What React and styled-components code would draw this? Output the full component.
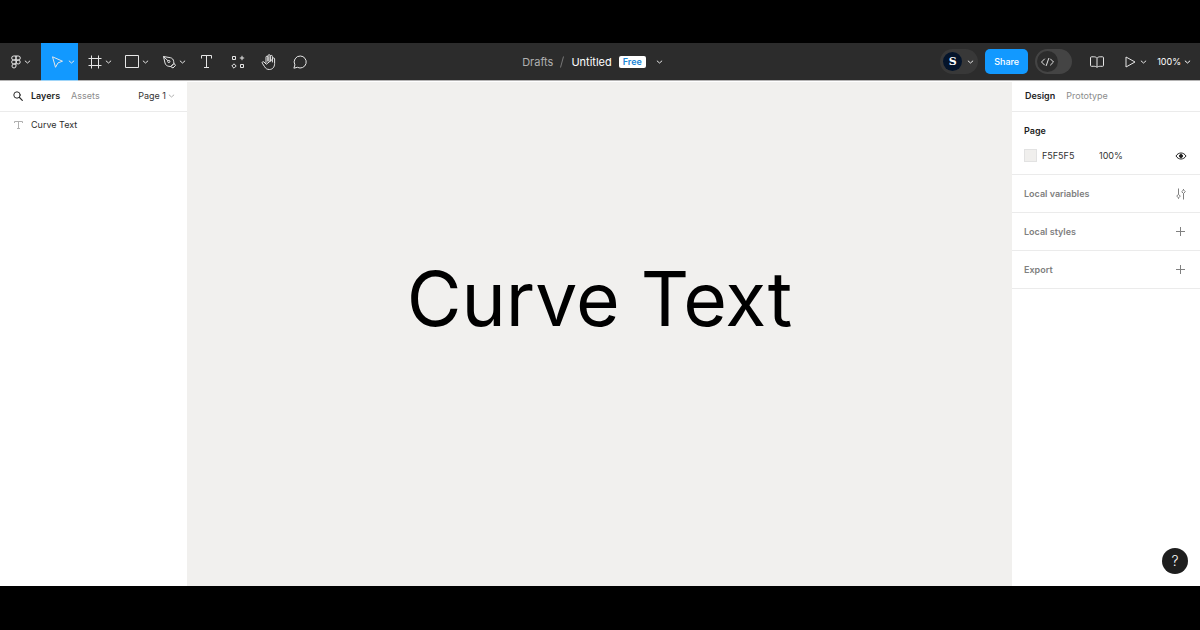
import React from 'react'
import styled, {createGlobalStyle, css} from 'styled-components'

const GlobalStyle = createGlobalStyle`
  * {
    box-sizing: border-box;
  }
  body {
    margin: 0;
    background: #000;
    font-family: Inter, "Liberation Sans", sans-serif;
    font-size: 9px;
    line-height: 12px;
    color: #2c2c2c;
  }
  button, input {
    font: inherit;
    color: inherit;
    background: none;
    border: 0;
    padding: 0;
    margin: 0;
  }
  svg {
    display: block;
    flex: none;
  }
`

const Screen = styled.div`
  min-height: 100vh;
  padding: 43px 0 44px;
  display: flex;
  background: #000;
`

const Editor = styled.div`
  position: relative;
  flex: 1;
  display: flex;
  flex-direction: column;
  background: #fff;
`

const Toolbar = styled.header`
  display: flex;
  height: 38px;
  background: #2c2c2c;
  border-bottom: 1px solid #b4b3b3;
  color: #e6e6e6;
`

const ToolGroup = styled.nav`
  flex: 1;
  display: flex;
`

const ToolButton = styled.button`
  display: flex;
  align-items: center;
  justify-content: center;
  width: 31px;
  ${({$menu}) => $menu && css`
    justify-content: flex-start;
    gap: 3px;
    width: 37px;
    padding-left: 10px;
  `}
  ${({$wide}) => $wide && css`
    gap: 2px;
    width: 41px;
  `}
  ${({$active}) => $active && css`
    background: #1299ff;
    box-shadow: 0 1px 0 #a0d5f8;
  `}
`

const PlainTools = styled.div`
  display: flex;
  padding-left: 2px;
`

const FileTitle = styled.div`
  display: flex;
  align-items: center;
  gap: 7px;
  padding-right: 6px;
  font-size: 11px;
`

const Crumb = styled.a`
  color: #b0b0b0;
  text-decoration: none;
`

const FileName = styled.span`
  color: #fff;
`

const PlanBadge = styled.span`
  padding: 0 4px;
  border-radius: 2px;
  background: #fff;
  color: #1b86d6;
  font-size: 9px;
  font-weight: 600;
`

const IconButton = styled.button`
  display: flex;
  align-items: center;
  justify-content: center;
  gap: ${({$gap}) => $gap || 0}px;
  color: ${({$color}) => $color || 'inherit'};
`

const Actions = styled.div`
  flex: 1;
  display: flex;
  align-items: center;
  justify-content: flex-end;
  padding-right: 9px;
`

const AccountButton = styled.button`
  display: flex;
  align-items: center;
  gap: 5px;
  height: 25px;
  padding: 0 4px 0 3px;
  border-radius: 13px;
  background: #383838;
`

const Avatar = styled.span`
  width: 19px;
  height: 19px;
  border-radius: 50%;
  background: #04142b;
  color: #fff;
  font-family: "DejaVu Serif", serif;
  font-size: 11px;
  font-weight: 700;
  line-height: 20px;
  text-align: center;
`

const ShareButton = styled.button`
  height: 25px;
  margin: 0 7px;
  padding: 0 9px;
  border-radius: 5px;
  background: #1299ff;
  color: #fff;
  font-weight: 500;
`

const DevSwitch = styled.button`
  width: 37px;
  height: 25px;
  margin-right: 18px;
  padding: 2px;
  border-radius: 13px;
  background: #444;
`

const SwitchThumb = styled.span`
  display: flex;
  align-items: center;
  justify-content: center;
  width: 21px;
  height: 21px;
  border-radius: 50%;
  background: #2c2c2c;
`

const ViewControls = styled.div`
  display: flex;
  align-items: center;
  gap: 10px;
`

const BookButton = styled(IconButton)`
  margin-right: 10px;
`

const FileMenuButton = styled(IconButton)`
  padding-left: 3px;
`

const Body = styled.div`
  flex: 1;
  display: flex;
`

const Panel = styled.aside`
  width: ${({$width}) => $width}px;
  flex: none;
  background: #fff;
`

const TabRow = styled.div`
  display: flex;
  align-items: center;
  gap: 11px;
  height: 31px;
  padding: 0 12px 0 13px;
  border-bottom: 1px solid #ebebeb;
`

const SearchButton = styled(IconButton)`
  width: 10px;
  margin-right: -3px;
`

const Tab = styled.button`
  color: ${({$active}) => ($active ? '#1e1e1e' : '#8c8c8c')};
  font-weight: ${({$active}) => ($active ? 600 : 400)};
`

const PageButton = styled(IconButton)`
  margin-left: auto;
`

const LayerRow = styled.button`
  display: flex;
  align-items: center;
  gap: 6px;
  width: 100%;
  height: 26px;
  padding: 0 13px;
`

const Canvas = styled.main`
  flex: 1;
  display: flex;
  align-items: center;
  justify-content: center;
  border-top: 1px solid #fff;
  padding-bottom: 70px;
  background: #f1f0ee;
`

const CanvasText = styled.h1`
  margin: 0;
  color: #000;
  font-size: 75px;
  font-weight: 400;
  line-height: 92px;
`

const PageSection = styled.section`
  height: 63px;
  padding: 13px 13px 0 12px;
  border-bottom: 1px solid #ebebeb;
`

const SectionTitle = styled.h2`
  margin: 0;
  font-size: 9px;
  font-weight: 600;
  color: ${({$muted}) => ($muted ? '#808080' : '#1e1e1e')};
`

const FillRow = styled.div`
  display: flex;
  align-items: center;
  margin-top: 12px;
`

const Swatch = styled.button`
  width: 13px;
  height: 13px;
  margin-right: 5px;
  border: 1px solid #e2e2e2;
  background: #f0efed;
`

const FillInput = styled.input`
  width: ${({$width}) => $width}px;
  color: #333;
`

const EyeButton = styled(IconButton)`
  margin-left: auto;
`

const SectionRow = styled.section`
  display: flex;
  align-items: center;
  justify-content: space-between;
  height: 38px;
  padding: 0 13px 0 12px;
  border-bottom: 1px solid #ebebeb;
`

const HelpButton = styled.button`
  position: absolute;
  right: 12px;
  bottom: 12px;
  width: 26px;
  height: 26px;
  border-radius: 50%;
  background: #1e1e1e;
  color: #fff;
  font-size: 14px;
  font-weight: 300;
  line-height: 26px;
`

const Icon = ({w = 14, h = 14, children, ...rest}) => (
  <svg
    width={w}
    height={h}
    viewBox={`0 0 ${w} ${h}`}
    fill="none"
    stroke="currentColor"
    strokeLinejoin="round"
    aria-hidden="true"
    {...rest}>
    {children}
  </svg>
)

const Chevron = ({color = 'currentColor'}) => (
  <Icon w={7} h={6} stroke={color} strokeLinecap="round">
    <path d="M1.200 2l2.300 2 2.300-2" />
  </Icon>
)

const FigmaIcon = () => (
  <Icon w={12} h={14} viewBox="1 0 12 14">
    <path d="M7 1H4.700a2 2 0 0 0 0 4H7zM7 1h2.300a2 2 0 0 1 0 4H7zM7 5H4.700a2 2 0 0 0 0 4H7zM7 9H4.700A2 2 0 1 0 7 11z" />
    <circle cx="9.200" cy="7" r="2" />
  </Icon>
)

const MoveIcon = () => (
  <Icon><path d="M1.500 1.800l10 4.400-4.500 1.700L4.500 12.300z" /></Icon>
)

const FrameIcon = () => (
  <Icon><path d="M3.500 0.500v13M10.500 0.500v13M0.500 3.500h13M0.500 10.500h13" /></Icon>
)

const RectIcon = () => (
  <Icon><path d="M0.500 0.500h13v12h-13z" strokeLinejoin="miter" /></Icon>
)

const PenIcon = () => (
  <Icon>
    <path d="M1.500 1.500l6.800 1.200c2 .4 3.200 1.800 3.400 3.800l.2 2-3 3-2-.2C4.900 11.100 3.500 9.900 3 8zM1.500 1.500l4.500 4.300M8.800 11.600l3.200-3.200 1.500 2-2.500 2.600z" />
    <circle cx="6.800" cy="6.500" r="1.100" />
  </Icon>
)

const TextIcon = () => (
  <Icon><path d="M1.500 3.500v-3h10v3M6.500 0.500v12M4 12.500h5" /></Icon>
)

const ResourcesIcon = () => (
  <Icon>
    <path d="M1.500 1.500h3v3h-3zM9.500 9.500h3v3h-3zM11 .8v4.400M8.800 3h4.400M3 8.800L5.200 11 3 13.200.8 11z" />
  </Icon>
)

const HandIcon = () => (
  <Icon w={16} h={16} strokeLinecap="round">
    <path d="M5 8.500V3.200a1 1 0 0 1 2 0V7M7 7V1.800a1.100 1.100 0 0 1 2.200 0V7M9.200 7V2.500a1.100 1.100 0 0 1 2.200 0V8M11.400 5a1.100 1.100 0 0 1 2.200 0v4.500c0 3.500-2 6-5.200 6-2.500 0-3.700-1-4.800-2.800L1.300 9.200c-.7-1.200.8-2 1.700-1.200L5 10z" />
  </Icon>
)

const CommentIcon = () => (
  <Icon>
    <path d="M7.300 1a6 6 0 1 1-2.900 11.300L.9 13.200l1-3.300A6 6 0 0 1 7.300 1z" />
  </Icon>
)

const CodeIcon = () => (
  <Icon w={14} h={10} strokeLinecap="round">
    <path d="M3.500 2l-3 3 3 3M9.500 2l3 3-3 3M7.700 1.500l-2.400 7" />
  </Icon>
)

const BookIcon = () => (
  <Icon w={15} h={12}>
    <path d="M7 2.200C6.200 1 5 .8 3.800 .8H1.500Q.5.800.5 1.800V9.500q0 .8 1 .8h2.300c1.300 0 2.400.2 3.200 1.200.8-1 1.900-1.200 3.200-1.200h2.300q1 0 1-.8V1.800q0-1-1-1h-2.300C9 .8 7.800 1 7 2.200zM7 2.200v9" />
  </Icon>
)

const PlayIcon = () => (
  <Icon w={11} h={12}><path d="M1 1l9 5-9 5z" /></Icon>
)

const SearchIcon = () => (
  <Icon w={10} h={10} strokeLinecap="round">
    <circle cx="4" cy="4" r="3.200" />
    <path d="M6.500 6.500L9.300 9.300" strokeWidth="1.200" />
  </Icon>
)

const LayerTextIcon = () => (
  <Icon w={12} h={10} stroke="#b0b0b0"><path d="M1.500 3V1.500h8V3M5.500 1.500v7M4 8.500h3" /></Icon>
)

const EyeIcon = () => (
  <Icon w={12} h={8} stroke="#1e1e1e">
    <path d="M1 4c1.200-2 3-3 5-3s3.800 1 5 3c-1.200 2-3 3-5 3S2.200 6 1 4z" />
    <circle cx="6" cy="4" r="1.500" fill="#1e1e1e" />
  </Icon>
)

const VariablesIcon = () => (
  <Icon w={12} h={12}>
    <path d="M3.500 0.500v6M3.500 9.800v1M8.500 5.200v6.300M8.500 1v1" />
    <path d="M3.500 6.300l1.800 1.800-1.800 1.800-1.800-1.800zM8.500 1.900l1.800 1.800-1.800 1.800-1.800-1.800z" />
  </Icon>
)

const PlusIcon = () => (
  <Icon w={12} h={12}><path d="M5.500 1v9M1 5.500h9" /></Icon>
)

const menuTools = [
  {label: 'Main menu', icon: FigmaIcon, wide: true},
  {label: 'Move', icon: MoveIcon, active: true},
  {label: 'Frame', icon: FrameIcon},
  {label: 'Rectangle', icon: RectIcon},
  {label: 'Pen', icon: PenIcon}
]

const plainTools = [
  {label: 'Text', icon: TextIcon},
  {label: 'Resources', icon: ResourcesIcon},
  {label: 'Hand', icon: HandIcon},
  {label: 'Comment', icon: CommentIcon}
]

const sections = [
  {title: 'Local variables', icon: VariablesIcon},
  {title: 'Local styles', icon: PlusIcon},
  {title: 'Export', icon: PlusIcon}
]

const TopBar = () => (
  <Toolbar>
    <ToolGroup>
      {menuTools.map(({label, icon: ToolIcon, active, wide}) => (
        <ToolButton key={label} aria-label={label} $menu $active={active} $wide={wide}>
          <ToolIcon />
          <Chevron />
        </ToolButton>
      ))}
      <PlainTools>
        {plainTools.map(({label, icon: ToolIcon}) => (
          <ToolButton key={label} aria-label={label}>
            <ToolIcon />
          </ToolButton>
        ))}
      </PlainTools>
    </ToolGroup>
    <FileTitle>
      <Crumb href="#drafts">Drafts</Crumb>
      <Icon w={4} h={12} stroke="#777"><path d="M3.500 0.500l-3 11" /></Icon>
      <FileName>Untitled</FileName>
      <PlanBadge>Free</PlanBadge>
      <FileMenuButton aria-label="File options"><Chevron /></FileMenuButton>
    </FileTitle>
    <Actions>
      <AccountButton aria-label="Account">
        <Avatar>S</Avatar>
        <Chevron />
      </AccountButton>
      <ShareButton>Share</ShareButton>
      <DevSwitch role="switch" aria-checked="false" aria-label="Dev mode">
        <SwitchThumb><CodeIcon /></SwitchThumb>
      </DevSwitch>
      <ViewControls>
        <BookButton aria-label="Library"><BookIcon /></BookButton>
        <IconButton $gap={4} aria-label="Present"><PlayIcon /><Chevron /></IconButton>
        <IconButton $gap={3} $color="#fff">100%<Chevron /></IconButton>
      </ViewControls>
    </Actions>
  </Toolbar>
)

const LayersPanel = () => (
  <Panel $width={187}>
    <TabRow>
      <SearchButton aria-label="Search"><SearchIcon /></SearchButton>
      <Tab $active>Layers</Tab>
      <Tab>Assets</Tab>
      <PageButton $gap={2} $color="#333">Page 1<Chevron color="#b0b0b0" /></PageButton>
    </TabRow>
    <LayerRow><LayerTextIcon />Curve Text</LayerRow>
  </Panel>
)

const DesignPanel = () => (
  <Panel $width={188}>
    <TabRow>
      <Tab $active>Design</Tab>
      <Tab>Prototype</Tab>
    </TabRow>
    <PageSection>
      <SectionTitle>Page</SectionTitle>
      <FillRow>
        <Swatch aria-label="Page colour" />
        <FillInput $width={57} aria-label="Hex" defaultValue="F5F5F5" />
        <FillInput $width={30} aria-label="Opacity" defaultValue="100%" />
        <EyeButton aria-label="Toggle visibility"><EyeIcon /></EyeButton>
      </FillRow>
    </PageSection>
    {sections.map(({title, icon: RowIcon}) => (
      <SectionRow key={title}>
        <SectionTitle $muted>{title}</SectionTitle>
        <IconButton $color="#808080" aria-label={title}><RowIcon /></IconButton>
      </SectionRow>
    ))}
  </Panel>
)

const App = () => (
  <>
    <GlobalStyle />
    <Screen>
      <Editor>
        <TopBar />
        <Body>
          <LayersPanel />
          <Canvas>
            <CanvasText>Curve Text</CanvasText>
          </Canvas>
          <DesignPanel />
        </Body>
        <HelpButton aria-label="Help">?</HelpButton>
      </Editor>
    </Screen>
  </>
)

export default App
